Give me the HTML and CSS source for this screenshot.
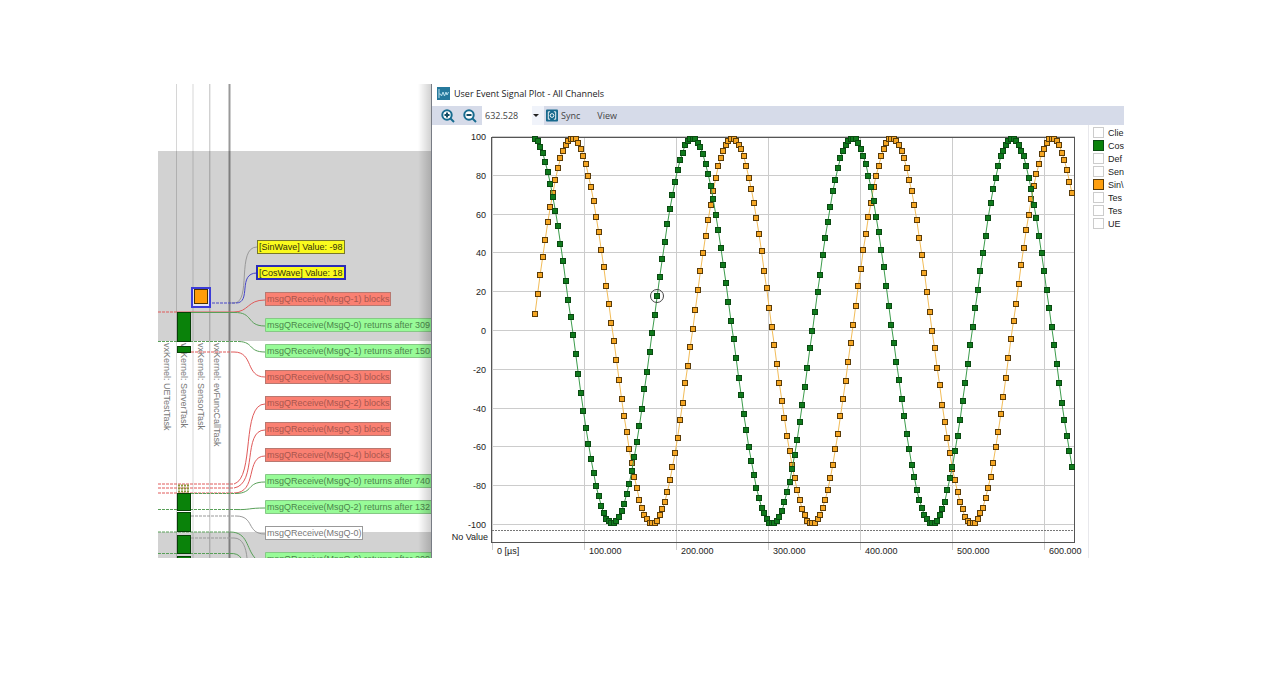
FILE: index.html
```html
<!DOCTYPE html>
<html lang="en">
<head>
    <meta charset="UTF-8">
    <meta name="viewport" content="width=device-width, initial-scale=1.0">
    <title>User Event Signal Plot</title>
    <link rel="stylesheet" href="styles.css">
</head>
<body>

<main class="workspace">
    <!-- Event trace -->
    <section class="trace">
        <svg class="trace-view" viewBox="158 84 273 474" role="img" aria-label="Event trace">
            <defs>
                <linearGradient id="edgeShadow">
                    <stop offset="0" stop-color="#000" stop-opacity="0"/>
                    <stop offset="1" stop-color="#000" stop-opacity="0.18"/>
                </linearGradient>
            </defs>
            <rect class="band" x="158" y="151" width="273" height="190"/>
            <rect class="band" x="158" y="532" width="273" height="26"/>

            <g class="lanes">
                <path d="M176.5 84V558M193 84V558"/>
                <path class="lane-mid" d="M209.8 84V558"/>
                <path class="lane-end" d="M229.5 84V558"/>
            </g>

            <g class="lane-names">
                <text transform="translate(164 343) rotate(90)">vxKernel: UETestTask</text>
                <text transform="translate(181 343) rotate(90)">vxKernel: ServerTask</text>
                <text transform="translate(198 343) rotate(90)">vxKernel: SensorTask</text>
                <text transform="translate(214 343) rotate(90)">vxKernel: evFuncCallTask</text>
            </g>

            <!-- dashed part inside the lanes, solid curve to the label -->
            <g class="wire gray">
                <path d="M230 303H234C252 303 236 247 257 247"/>
                <path class="dash" d="M191 516H236"/>
                <path d="M236 516C255 516 246 534 265 534"/>
                <path class="dash" d="M191 538H234"/>
                <path d="M234 538C243 538 246 548 247 558"/>
            </g>
            <g class="wire blue">
                <path class="dash" d="M212 303H236"/>
                <path d="M236 303C252 303 237 273 257 273"/>
            </g>
            <g class="wire red">
                <path class="dash" d="M158 312H177"/>
                <path d="M177 312H234C249 312 247 300 265 300"/>
                <path class="dash" d="M191 352H234"/>
                <path d="M234 352C254 352 245 377 265 377"/>
                <path class="dash" d="M158 484H234M158 488H234M158 493H234"/>
                <path d="M234 484C255 478 241 404 265 404"/>
                <path d="M234 488C258 484 242 430 265 430"/>
                <path d="M234 493C258 493 245 456 265 456"/>
            </g>
            <g class="wire green">
                <path d="M191 312.5H234C254 312 246 326 265 326"/>
                <path class="dash" d="M158 341.5H239"/>
                <path d="M239 341.5C254 342 248 352 265 352"/>
                <path class="dash" d="M191 493.5H236"/>
                <path d="M236 493.5C254 493 246 482 265 482"/>
                <path class="dash" d="M158 509.5H236"/>
                <path d="M236 509.5C250 510 248 508 265 508"/>
                <path class="dash" d="M158 532H230M158 553.5H230"/>
                <path d="M230 532C248 532 246 548 255 558"/>
                <path d="M230 553.5Q238 553 241 558"/>
            </g>

            <g class="task-run">
                <rect x="177.500" y="312.500" width="13" height="29"/>
                <rect x="177.500" y="346.500" width="13" height="6"/>
                <rect x="177.500" y="493.500" width="13" height="17"/>
                <rect x="177.500" y="512.500" width="13" height="19"/>
                <rect x="177.500" y="535.500" width="13" height="18"/>
                <rect x="177.500" y="556.500" width="13" height="4"/>
                <path class="ready" d="M178 485.500H190M178 488.500H190M178 491.500H190"/>
            </g>
            <rect class="event-focus" x="192" y="288" width="18" height="19"/>
            <rect class="event" x="194.500" y="289.500" width="13" height="14"/>

            <g class="label value">
                <rect x="257.500" y="240.500" width="87" height="13"/>
                <text x="259" y="250">[SinWave] Value: -98</text>
                <rect class="selected" x="257" y="266" width="88" height="13"/>
                <text x="259" y="276">[CosWave] Value: 18</text>
            </g>
            <g class="label blocks">
                <rect x="265.500" y="292.500" width="125" height="13"/>
                <text x="267" y="302">msgQReceive(MsgQ-1) blocks</text>
                <rect x="265.500" y="370.500" width="125" height="13"/>
                <text x="267" y="380">msgQReceive(MsgQ-3) blocks</text>
                <rect x="265.500" y="396.500" width="125" height="13"/>
                <text x="267" y="406">msgQReceive(MsgQ-2) blocks</text>
                <rect x="265.500" y="422.500" width="125" height="13"/>
                <text x="267" y="432">msgQReceive(MsgQ-3) blocks</text>
                <rect x="265.500" y="448.500" width="125" height="13"/>
                <text x="267" y="458">msgQReceive(MsgQ-4) blocks</text>
            </g>
            <g class="label returns">
                <path d="M431 318.500H265.500V331.500H431"/>
                <text x="267" y="328">msgQReceive(MsgQ-0) returns after 309</text>
                <path d="M431 344.500H265.500V357.500H431"/>
                <text x="267" y="354">msgQReceive(MsgQ-1) returns after 150</text>
                <path d="M431 474.500H265.500V487.500H431"/>
                <text x="267" y="484">msgQReceive(MsgQ-0) returns after 740</text>
                <path d="M431 500.500H265.500V513.500H431"/>
                <text x="267" y="510">msgQReceive(MsgQ-2) returns after 132</text>
                <path d="M431 552.500H265.500V565.500H431"/>
                <text x="267" y="562">msgQReceive(MsgQ-0) returns after 209</text>
            </g>
            <g class="label plain">
                <rect x="265.500" y="526.500" width="97" height="13"/>
                <text x="267" y="536">msgQReceive(MsgQ-0)</text>
            </g>
            <rect x="418" y="84" width="13" height="474" fill="url(#edgeShadow)"/>
        </svg>
    </section>

    <!-- Signal plot window -->
    <section class="window">
        <header class="title-bar">
            <svg class="app-icon" viewBox="0 0 13 13" aria-hidden="true">
                <rect width="13" height="13" fill="#26799c"/>
                <path d="M2 2v9M2 7h1.500l1 2 1.500-4 1.500 4L9 5l1 3 1.500-3" fill="none" stroke="#b4dcea"/>
            </svg>
            <h1>User Event Signal Plot - All Channels</h1>
        </header>

        <div class="toolbar">
            <button class="tool" type="button" aria-label="Zoom in">
                <svg viewBox="0 0 14 14"><circle cx="6" cy="6" r="4.700"/><path d="M9.500 9.500L13 13"/><path class="sign" d="M3.500 6h5M6 3.500v5"/></svg>
            </button>
            <button class="tool" type="button" aria-label="Zoom out">
                <svg viewBox="0 0 14 14"><circle cx="6" cy="6" r="4.700"/><path d="M9.500 9.500L13 13"/><path class="sign" d="M3.500 6h5"/></svg>
            </button>
            <span class="zoom-box">
                <select aria-label="Zoom level">
                    <option>632.528</option>
                </select>
            </span>
            <button class="sync" type="button">
                <svg viewBox="0 0 13 13"><rect width="13" height="13" rx="1" fill="#17698d"/><path d="M4.500 2.500h-2v8h2M8.500 2.500h2v8h-2" fill="none" stroke="#fff"/><circle cx="6.500" cy="6.500" r="2" fill="none" stroke="#fff"/></svg>
                Sync
            </button>
            <button class="menu" type="button">View</button>
        </div>

        <div class="content">
            <svg class="plot" viewBox="432 125 656 433" role="img" aria-label="Signal values over time">
                <g id="grid"></g>
                <path class="no-value" d="M492 530.500H1075"/>
                <rect class="frame" x="491.500" y="137.500" width="583" height="405"/>
                <g id="axisText"></g>
                <g id="series"></g>
                <circle class="cursor" cx="657" cy="296" r="6.500"/>
            </svg>
            <div class="legend">
                <label><input type="checkbox">Clie</label>
                <label><input type="checkbox" class="cos" checked>Cos'</label>
                <label><input type="checkbox">Def</label>
                <label><input type="checkbox">Sen</label>
                <label><input type="checkbox" class="sin" checked>Sin\</label>
                <label><input type="checkbox">Tes</label>
                <label><input type="checkbox">Tes</label>
                <label><input type="checkbox">UE</label>
            </div>
        </div>
    </section>
</main>

<script src="plot.js"></script>
</body>
</html>
```
FILE: styles.css
```css
* {
    box-sizing: border-box;
}

body {
    margin: 0;
    background: #fff;
    color: #222;
    font-family: "Liberation Sans", Arial, sans-serif;
    font-size: 9px;
}

.workspace {
    display: grid;
    grid-template-columns: 273fr 693fr;
    width: 100%;
    max-width: 968px;
    margin: 84px auto;
    padding-left: 2px;
    overflow: hidden;
}

.trace,
.window {
    min-width: 0;
}

.trace-view,
.plot {
    display: block;
    width: 100%;
    height: auto;
}

/* Trace */
.band {
    fill: #d2d2d2;
}

.lanes path {
    stroke: #000;
    stroke-opacity: 0.16;
}

.lanes .lane-mid {
    stroke-opacity: 0.26;
}

.lanes .lane-end {
    stroke-width: 2;
    stroke-opacity: 0.4;
}

.lane-names {
    fill: #777;
    font-size: 9px;
}

.wire {
    fill: none;
}

.dash {
    stroke-dasharray: 3 1;
}

.gray {
    stroke: #999;
}

.blue {
    stroke: #4646c8;
}

.red {
    stroke: #e05a5a;
}

.green {
    stroke: #58a058;
}

.task-run rect {
    fill: #0a820a;
    stroke: #064006;
}

.ready {
    stroke: #8c963c;
    stroke-width: 2;
    stroke-dasharray: 2 1;
}

.event {
    fill: #ff9c0a;
    stroke: #4a3200;
}

.event-focus {
    fill: #e4e4f4;
    stroke: #3c3cd8;
    stroke-width: 2;
}

.label {
    font-size: 9px;
}

.value rect {
    fill: #fafa1e;
    stroke: #77772c;
}

.value .selected {
    stroke: #2b2bb8;
    stroke-width: 2;
}

.value text {
    fill: #33330a;
}

.blocks rect {
    fill: #fa8072;
    stroke: #b87870;
}

.blocks text {
    fill: #a8564e;
}

.returns path {
    fill: #98fb98;
    stroke: #86c886;
}

.returns text {
    fill: #4c864c;
}

.plain rect {
    fill: #fff;
    stroke: #999;
}

.plain text {
    fill: #777;
}

/* Plot window */
.window {
    display: flex;
    flex-direction: column;
    border-left: 1px solid #777b84;
    background: #fff;
    overflow: hidden;
}

.title-bar {
    display: flex;
    align-items: center;
    gap: 4px;
    height: 22px;
    padding: 0 5px 4px;
}

.title-bar h1 {
    margin: 0;
    font-family: "Open Sans", sans-serif;
    font-size: 9px;
    font-weight: 400;
    white-space: nowrap;
}

.app-icon {
    width: 13px;
    height: 13px;
}

.toolbar {
    display: flex;
    align-items: center;
    height: 19px;
    padding-left: 9px;
    background: #d6dbe9;
}

.toolbar button,
.toolbar select {
    border: 0;
    padding: 0;
    background: none;
    color: #444;
    font-family: "Open Sans", sans-serif;
    font-size: 9px;
}

.tool {
    width: 14px;
    height: 14px;
    margin-right: 8px;
}

.tool svg {
    display: block;
    fill: #fff;
    stroke: #176c90;
    stroke-width: 2;
}

.tool .sign {
    stroke: #144c64;
}

.zoom-box {
    position: relative;
    margin-left: -3px;
}

.toolbar select {
    display: block;
    width: 62px;
    height: 19px;
    padding-left: 3px;
    appearance: none;
    background: linear-gradient(to right, #fff 50px, #f0f3fa 50px);
}

.zoom-box::after {
    content: "";
    position: absolute;
    top: 8px;
    right: 5px;
    border: 3px solid transparent;
    border-top-color: #222;
    border-bottom: 0;
    pointer-events: none;
}

.toolbar .sync {
    display: flex;
    align-items: center;
    gap: 3px;
    margin-left: 2px;
}

.sync svg {
    width: 12px;
    height: 13px;
}

.toolbar .menu {
    margin-left: 17px;
}

.content {
    display: grid;
    grid-template-columns: 656fr 36fr;
}

.grid-line {
    stroke: #ccc;
    fill: none;
}

.no-value {
    stroke: #777;
    stroke-dasharray: 2 1;
}

.frame {
    fill: none;
    stroke: #555;
}

.axis-label {
    fill: #222;
    font-size: 9px;
}

.axis-label.left {
    text-anchor: end;
}

.cos-line {
    fill: none;
    stroke: #3c9c4c;
}

.sin-line {
    fill: none;
    stroke: #f2bc58;
}

.cos-point {
    fill: #0f7a1c;
    stroke: #0a4a12;
}

.sin-point {
    fill: #f5a623;
    stroke: #5a3c0a;
}

.cursor {
    fill: none;
    stroke: #444;
}

.legend {
    display: flex;
    flex-direction: column;
    min-width: 0;
    padding: 1px 0 0 4px;
    border-left: 1px solid #e8e8ec;
}

.legend label {
    display: flex;
    align-items: center;
    gap: 4px;
    height: 13px;
    white-space: nowrap;
}

.legend input {
    flex: none;
    width: 11px;
    height: 11px;
    margin: 0;
    appearance: none;
    border: 1px solid #ccc;
    background: #fff;
}

.legend .cos {
    border-color: #0a4a12;
    background: #0a820a;
}

.legend .sin {
    border-color: #5a3c0a;
    background: #ff9f0f;
}
```
FILE: plot.js
```js
const NS = 'http://www.w3.org/2000/svg';

function add(parent, name, attrs, text) {
    const el = document.createElementNS(NS, name);
    for (const key in attrs) {
        el.setAttribute(key, attrs[key]);
    }
    if (text) {
        el.textContent = text;
    }
    parent.appendChild(el);
}

const grid = document.getElementById('grid');
const axisText = document.getElementById('axisText');
const series = document.getElementById('series');

const toY = value => 331 - value * 1.94;

// Value axis
for (let v = 100; v >= -100; v -= 20) {
    const y = Math.round(toY(v));
    add(grid, 'path', { class: 'grid-line', d: `M492 ${y - 0.5}H1075` });
    add(axisText, 'text', { class: 'axis-label left', x: 486, y: y + 3 }, String(v));
}
add(axisText, 'text', { class: 'axis-label left', x: 488, y: 540 }, 'No Value');

// Time axis
for (let i = 0; i <= 6; i++) {
    const x = Math.round(491.5 + i * 92.1);
    add(grid, 'path', { class: 'grid-line', d: `M${x + 0.5} 137V550` });
    add(axisText, 'text', { class: 'axis-label', x: x + 5, y: 554 }, i === 0 ? '0 [µs]' : i + '00.000');
}

// One sample every 0.1 rad, values cut to whole numbers
function drawWave(name, wave) {
    const points = [];
    for (let i = 1; i <= 212; i++) {
        points.push([532.5 + i * 2.545, toY(Math.trunc(100 * wave(i / 10)))]);
    }
    add(series, 'polyline', { class: name + '-line', points: points.join(' ') });
    for (const [x, y] of points) {
        add(series, 'rect', {
            class: name + '-point',
            x: Math.round(x) - 2.5,
            y: Math.round(y) - 2.5,
            width: 5,
            height: 5
        });
    }
}

drawWave('sin', Math.sin);
drawWave('cos', Math.cos);
```
